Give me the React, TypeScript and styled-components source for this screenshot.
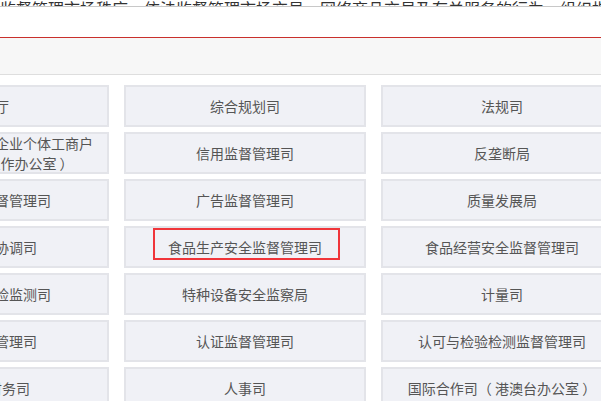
import React from "react";
import styled, { createGlobalStyle } from "styled-components";

const Global = createGlobalStyle`
  html, body { margin: 0; padding: 0; background: #fff; overflow: hidden; }
  body { font-family: "Noto Sans CJK SC", "Noto Sans", sans-serif; }
`;

const Page = styled.div`
  width: 601px;
  height: 401px;
  overflow: hidden;
  display: flex;
  flex-direction: column;
  & > * { flex-shrink: 0; }
`;

const TopStrip = styled.div`
  height: 6px;
  overflow: hidden;
  display: flex;
  align-items: flex-end;
  border-bottom: 1px solid #c8c8c8;
`;

const TopText = styled.p`
  margin: 0;
  font-size: 16px;
  line-height: 20px;
  color: #333;
  white-space: nowrap;
  flex: none;
  transform: translateY(12px);
`;

const HeaderSpace = styled.div`
  height: 30px;
  border-bottom: 1px solid #c9302c;
`;

const Band = styled.div`
  height: 36px;
  background: #f7f7f7;
  border-bottom: 1px solid #dedede;
`;

const Grid = styled.div`
  display: grid;
  grid-template-columns: repeat(3, 242px);
  grid-auto-rows: 42px;
  column-gap: 15px;
  row-gap: 5px;
  margin: 10px 0 0 -133px;
`;

const Card = styled.div`
  position: relative;
  box-sizing: border-box;
  background: #f0f1f6;
  border: 2px solid #e3e4e9;
  display: flex;
  align-items: center;
  justify-content: center;
  text-align: center;
  font-size: 14px;
  line-height: 20px;
  color: #555;
  white-space: nowrap;
`;

const Highlight = styled.span`
  position: absolute;
  left: 27px;
  top: 0px;
  width: 187px;
  height: 32px;
  box-sizing: border-box;
  border: 2px solid #f0353a;
  pointer-events: none;
`;

const items: { name: React.ReactNode; mark?: boolean }[] = [
  { name: "办公厅" },
  { name: "综合规划司" },
  { name: "法规司" },
  { name: <>登记注册局（小微企业个体工商户<br />专业市场党建工作办公室 ）</> },
  { name: "信用监督管理司" },
  { name: "反垄断局" },
  { name: "网络交易监督管理司" },
  { name: "广告监督管理司" },
  { name: "质量发展局" },
  { name: "食品安全协调司" },
  { name: "食品生产安全监督管理司", mark: true },
  { name: "食品经营安全监督管理司" },
  { name: "食品安全抽检监测司" },
  { name: "特种设备安全监察局" },
  { name: "计量司" },
  { name: "标准技术管理司" },
  { name: "认证监督管理司" },
  { name: "认可与检验检测监督管理司" },
  { name: "科技和财务司" },
  { name: "人事司" },
  { name: "国际合作司（ 港澳台办公室 ）" },
];

export default function App() {
  return (
    <Page>
      <Global />
      <TopStrip>
        <TopText>监督管理市场秩序，依法监督管理市场交易、网络商品交易及有关服务的行为，组织指导</TopText>
      </TopStrip>
      <HeaderSpace />
      <Band />
      <Grid>
        {items.map((it, i) => (
          <Card key={i}>
            <div>{it.name}</div>
            {it.mark && <Highlight />}
          </Card>
        ))}
      </Grid>
    </Page>
  );
}
